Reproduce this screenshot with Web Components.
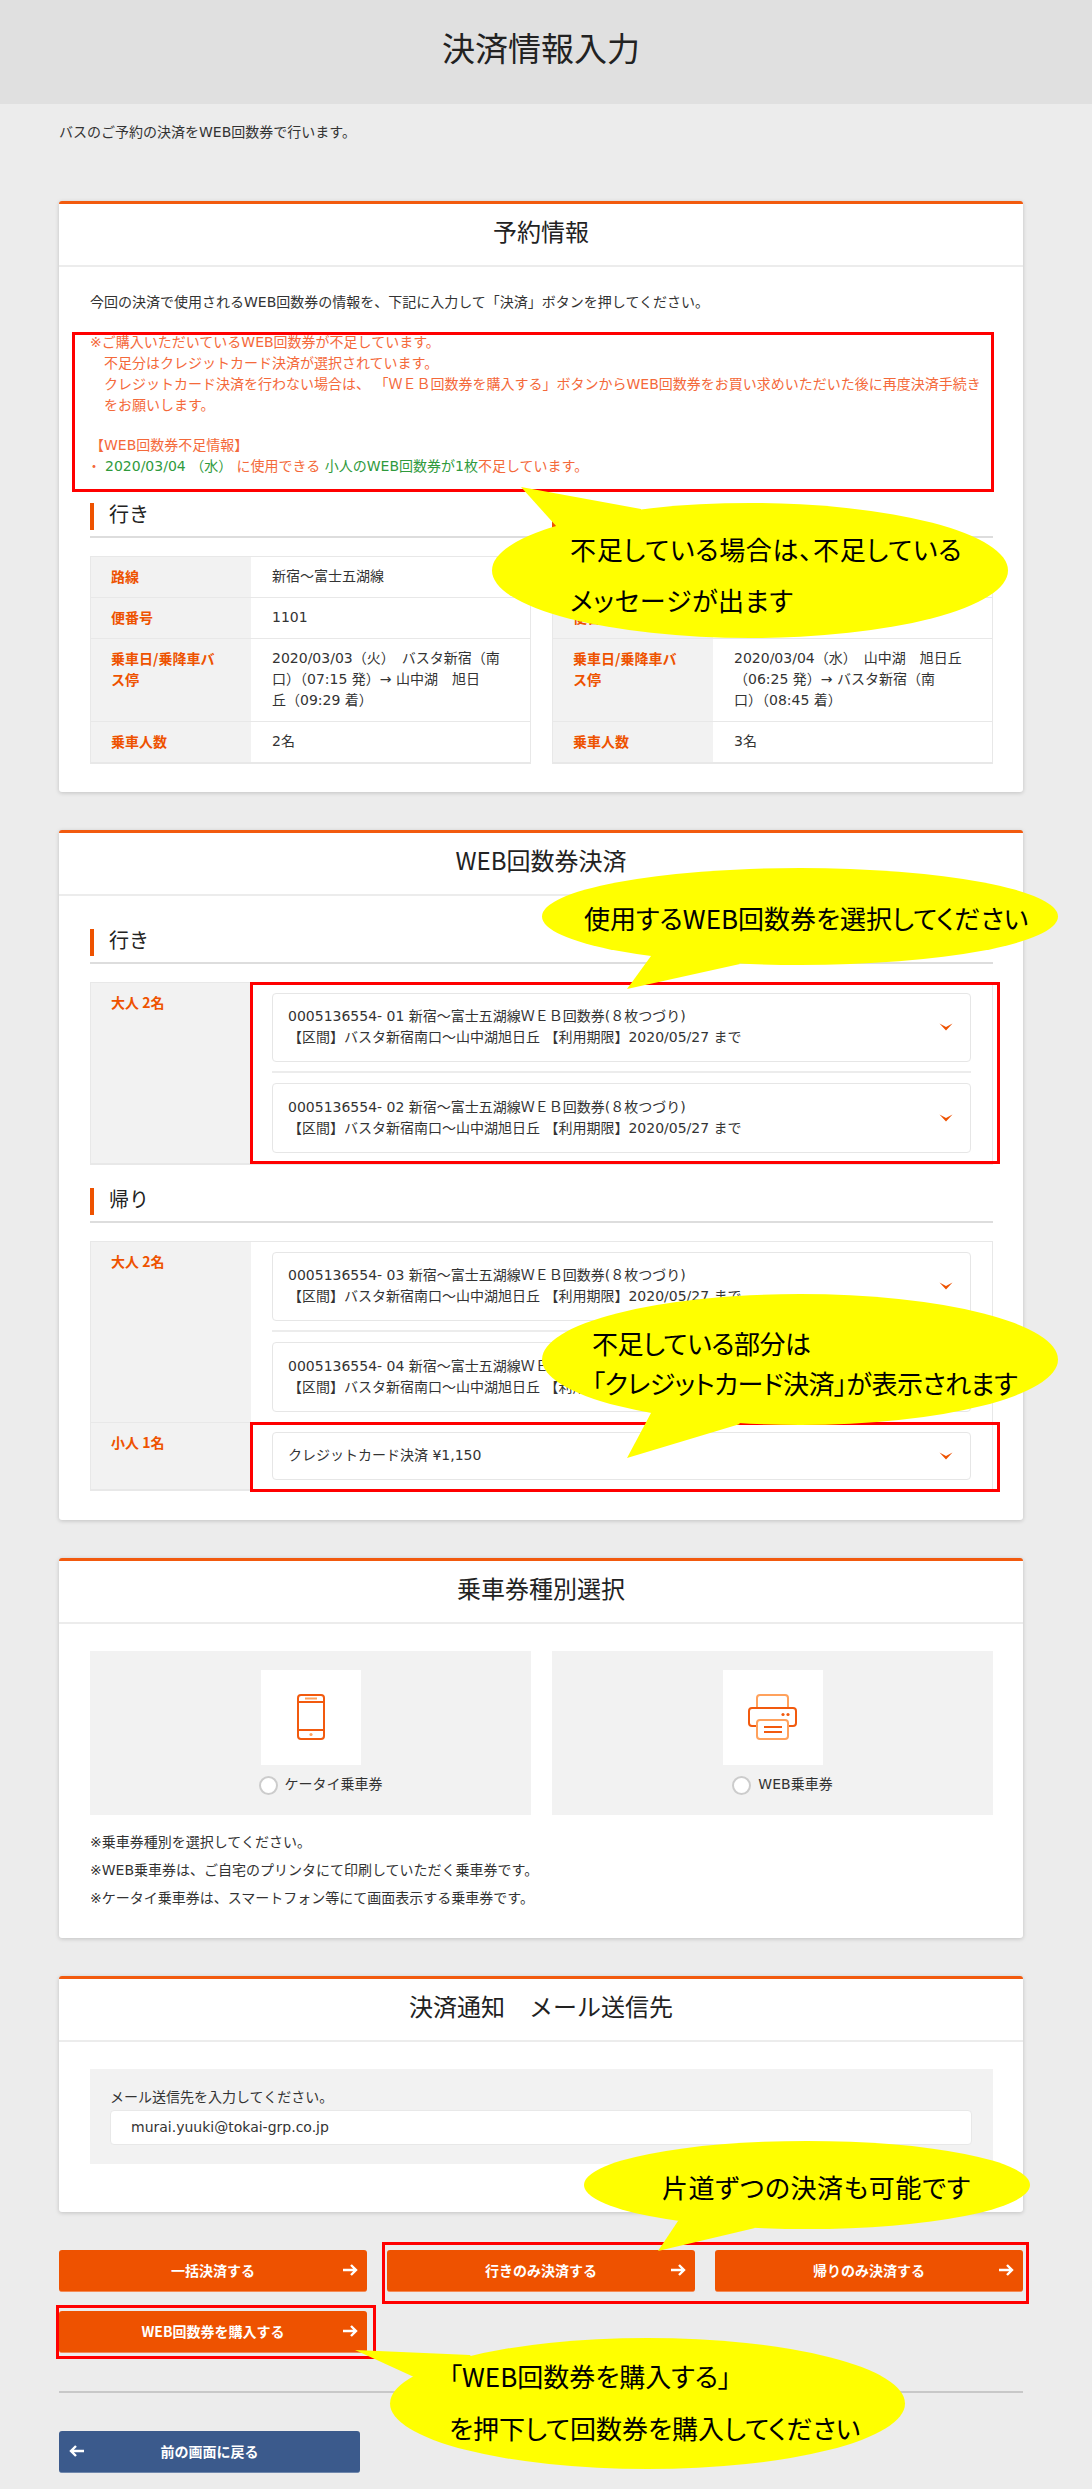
<!DOCTYPE html>
<html lang="ja">

<head>
    <meta charset="utf-8">
    <title>決済情報入力</title>
    <style>
        body {
            position: relative;
            margin: 0;
            height: 2489px;
            overflow: hidden;
            background: #ececec;
            color: #333;
            font: 14px/21px "DejaVu Sans", "Noto Sans CJK JP", sans-serif;
        }

        .wrap {
            display: flex;
            flex-direction: column;
            gap: 38px;
            padding: 0 69px 0 59px;
        }

        .intro {
            margin: 17.5px 0 0;
            height: 41px;
        }

        .two {
            display: grid;
            grid-template-columns: 1fr 1fr;
            gap: 21px;
        }
    </style>
</head>

<body>
    <page-head>決済情報入力</page-head>

    <div class="wrap">
        <p class="intro">バスのご予約の決済をWEB回数券で行います。</p>

        <pay-card heading="予約情報" top="25.5" bottom="28">
            <lead-text>今回の決済で使用されるWEB回数券の情報を、下記に入力して「決済」ボタンを押してください。</lead-text>
            <short-message></short-message>
            <div class="two">
                <div>
                    <sec-head>行き</sec-head>
                    <info-table>
                        <info-row label="路線">新宿～富士五湖線</info-row>
                        <info-row label="便番号">1101</info-row>
                        <info-row label="乗車日/乗降車バ<br>ス停">2020/03/03（火）　バスタ新宿（南<br>口）（07:15 発）→ 山中湖　旭日<br>丘（09:29 着）</info-row>
                        <info-row label="乗車人数">2名</info-row>
                    </info-table>
                </div>
                <div>
                    <sec-head>帰り</sec-head>
                    <info-table>
                        <info-row label="路線"></info-row>
                        <info-row label="便番号"></info-row>
                        <info-row label="乗車日/乗降車バ<br>ス停">2020/03/04（水）　山中湖　旭日丘<br>（06:25 発）→ バスタ新宿（南<br>口）（08:45 着）</info-row>
                        <info-row label="乗車人数">3名</info-row>
                    </info-table>
                </div>
            </div>
        </pay-card>

        <pay-card heading="WEB回数券決済" top="33" bottom="29">
            <sec-head>行き</sec-head>
            <info-table>
                <ticket-row label="大人 2名">
                    <ticket-select>0005136554- 01 新宿～富士五湖線ＷＥＢ回数券(８枚つづり)<br>【区間】バスタ新宿南口～山中湖旭日丘 【利用期限】2020/05/27 まで</ticket-select>
                    <ticket-select>0005136554- 02 新宿～富士五湖線ＷＥＢ回数券(８枚つづり)<br>【区間】バスタ新宿南口～山中湖旭日丘 【利用期限】2020/05/27 まで</ticket-select>
                </ticket-row>
            </info-table>
            <sec-head style="margin-top:23px">帰り</sec-head>
            <info-table>
                <ticket-row label="大人 2名">
                    <ticket-select>0005136554- 03 新宿～富士五湖線ＷＥＢ回数券(８枚つづり)<br>【区間】バスタ新宿南口～山中湖旭日丘 【利用期限】2020/05/27 まで</ticket-select>
                    <ticket-select>0005136554- 04 新宿～富士五湖線ＷＥＢ回数券(８枚つづり)<br>【区間】バスタ新宿南口～山中湖旭日丘 【利用期限】2020/05/27 まで</ticket-select>
                </ticket-row>
                <ticket-row label="小人 1名" compact>
                    <ticket-select single>クレジットカード決済 ¥1,150</ticket-select>
                </ticket-row>
            </info-table>
        </pay-card>

        <pay-card heading="乗車券種別選択" top="27" bottom="28.5">
            <div class="two">
                <type-panel icon="phone">ケータイ乗車券</type-panel>
                <type-panel icon="printer">WEB乗車券</type-panel>
            </div>
            <note-list>
                <div>※乗車券種別を選択してください。</div>
                <div>※WEB乗車券は、ご自宅のプリンタにて印刷していただく乗車券です。</div>
                <div>※ケータイ乗車券は、スマートフォン等にて画面表示する乗車券です。</div>
            </note-list>
        </pay-card>

        <pay-card heading="決済通知　メール送信先" top="27" bottom="48">
            <mail-field label="メール送信先を入力してください。">murai.yuuki@tokai-grp.co.jp</mail-field>
        </pay-card>

        <action-bar>
            <act-button>一括決済する</act-button>
            <act-button>行きのみ決済する</act-button>
            <act-button>帰りのみ決済する</act-button>
            <act-button>WEB回数券を購入する</act-button>
            <act-button back slot="back">前の画面に戻る</act-button>
        </action-bar>
    </div>

    <!-- 注釈 (画面の上に重ねる赤枠と吹き出し) -->
    <red-box area="72,332,922,160"></red-box>
    <red-box area="250,982,750,182"></red-box>
    <red-box area="250,1422,750,70"></red-box>
    <red-box area="382,2242,647,62"></red-box>
    <red-box area="56,2305,320,54"></red-box>

    <call-out style="letter-spacing:.7px" oval="492,503,516,135" tail="521,487 557,527 641,560 641,509" at="570,523" lh="51">不足している場合は、不足している<br>メッセージが出ます</call-out>
    <call-out oval="542,868,516,97" tail="627,989 651,956 700,930 740,964" at="584,897" lh="42">使用するWEB回数券を選択してください</call-out>
    <call-out style="letter-spacing:-.5px" oval="542,1294,516,131" tail="627,1458 651,1413 700,1380 740,1424" at="592,1323" lh="40">不足している部分は<br>「クレジットカード決済」が表示されます</call-out>
    <call-out style="letter-spacing:.6px" oval="584,2141,446,88" tail="658,2251 678,2221 720,2190 755,2228" at="662,2166" lh="42">片道ずつの決済も可能です</call-out>
    <call-out oval="390,2338,515,131" tail="355,2350 414,2377 500,2400 470,2355" at="449,2350" lh="52">「WEB回数券を購入する」<br>を押下して回数券を購入してください</call-out>

    <script>
        const ORANGE = '#ee5200'
        const HEAD_FONT = '"Noto Sans CJK JP", sans-serif'

        // shadow root helper
        function mount(el, html) {
            el.attachShadow({ mode: 'open' }).innerHTML = html
        }

        class PageHead extends HTMLElement {
            connectedCallback() {
                mount(this, `<style>
                    :host { display: block; height: 104px; background: #e0e0e0; padding-right: 10px; }
                    h1 { margin: 0; font: 400 33px/95px ${HEAD_FONT}; text-align: center; color: #222; }
                </style><h1><slot></slot></h1>`)
            }
        }

        class PayCard extends HTMLElement {
            connectedCallback() {
                const top = this.getAttribute('top')
                const bottom = this.getAttribute('bottom')
                mount(this, `<style>
                    :host { display: block; background: #fff; border-top: 3px solid #f25a0e; border-radius: 3px; box-shadow: 0 1px 4px rgba(0,0,0,.18); }
                    h2 { margin: 0; height: 61px; font: 400 24px/53px ${HEAD_FONT}; text-align: center; color: #222; border-bottom: 2px solid #ececec; }
                    .body { padding: ${top}px 30px ${bottom}px 31px; }
                </style><h2>${this.getAttribute('heading')}</h2><div class="body"><slot></slot></div>`)
            }
        }

        class LeadText extends HTMLElement {
            connectedCallback() {
                mount(this, `<style>:host { display: block; margin-bottom: 19px; }</style><slot></slot>`)
            }
        }

        class ShortMessage extends HTMLElement {
            connectedCallback() {
                mount(this, `<style>
                    :host { display: block; margin-bottom: 25.5px; color: #f4693a; white-space: nowrap; }
                    .ind { padding-left: 14px; }
                    .info { margin-top: 19px; }
                    .g { color: #2f9a3c; }
                    .dot { margin: 0 4px 0 -3px; }
                </style>
                <div>※ご購入いただいているWEB回数券が不足しています。</div>
                <div class="ind">不足分はクレジットカード決済が選択されています。</div>
                <div class="ind">クレジットカード決済を行わない場合は、 「ＷＥＢ回数券を購入する」ボタンからWEB回数券をお買い求めいただいた後に再度決済手続き<br>をお願いします。</div>
                <div class="info">【WEB回数券不足情報】</div>
                <div><span class="dot">・</span><span class="g">2020/03/04 （水）</span> に使用できる <span class="g">小人のWEB回数券が1枚</span>不足しています。</div>`)
            }
        }

        class SecHead extends HTMLElement {
            connectedCallback() {
                mount(this, `<style>
                    :host { display: block; border-bottom: 2px solid #ddd; padding-bottom: 6px; margin-bottom: 18px; }
                    div { border-left: 4px solid ${ORANGE}; padding: 0 0 5px 15px; font: 20px/22px ${HEAD_FONT}; color: #222; }
                </style><div><slot></slot></div>`)
            }
        }

        class InfoTable extends HTMLElement {
            connectedCallback() {
                mount(this, `<style>
                    :host { display: block; border: 1px solid #e8e8e8; border-bottom-width: 2px; }
                    ::slotted(*:not(:last-child)) { border-bottom: 1px solid #e8e8e8; }
                </style><slot></slot>`)
            }
        }

        class InfoRow extends HTMLElement {
            connectedCallback() {
                mount(this, `<style>
                    :host { display: grid; grid-template-columns: 160px 1fr; }
                    .th { background: #f2f2f2; color: ${ORANGE}; font-weight: 700; font-family: ${HEAD_FONT}; padding: 9.5px 20px; }
                    .td { padding: 9.5px 21px; min-height: 21px; white-space: nowrap; }
                </style><div class="th">${this.getAttribute('label')}</div><div class="td"><slot></slot></div>`)
            }
        }

        class TicketRow extends HTMLElement {
            connectedCallback() {
                const pad = this.hasAttribute('compact') ? 9 : 10
                mount(this, `<style>
                    :host { display: grid; grid-template-columns: 160px 1fr; }
                    .th { background: #f2f2f2; color: ${ORANGE}; font-weight: 700; font-family: ${HEAD_FONT}; padding: 9px 20px; }
                    .td { padding: ${pad}px 21px; display: flex; flex-direction: column; gap: 10px; }
                </style><div class="th">${this.getAttribute('label')}</div><div class="td"><slot></slot></div>`)
            }
        }

        class TicketSelect extends HTMLElement {
            connectedCallback() {
                const single = this.hasAttribute('single')
                mount(this, `<style>
                    :host { display: block; position: relative; }
                    :host(:not(:last-child)) { margin-bottom: 11px; }
                    :host(:not(:last-child))::after { content: ""; position: absolute; left: 0; right: 0; bottom: -11px; height: 2px; background: #ececec; }
                    .box { display: flex; align-items: center; justify-content: space-between; height: ${single ? 46 : 67.5}px; padding: 0 17px 0 15px; background: #fff; border: 1px solid #e6e6e6; border-radius: 4px; white-space: nowrap; }
                    svg { display: block; }
                </style><div class="box"><span><slot></slot></span>
                <svg width="14" height="8" viewBox="0 0 14 8"><polygon points="0.5,0.5 7,4 13.5,0.5 7,7.5" fill="${ORANGE}"/></svg></div>`)
            }
        }

        const ICONS = {
            phone: `<svg width="28" height="46" viewBox="0 0 28 46" fill="none" stroke="#f25a0e" stroke-width="2">
                <rect x="1" y="1" width="26" height="44" rx="3"/><path d="M1 8H27M1 36H27"/>
                <path d="M8 4.5H20" stroke="#ffa15c"/><circle cx="14" cy="40.5" r="1.6" fill="#ffa15c" stroke="none"/></svg>`,
            printer: `<svg width="50" height="46" viewBox="0 0 50 46" fill="none" stroke-width="2">
                <path d="M9 14V4a3 3 0 0 1 3-3H37a3 3 0 0 1 3 3V14" stroke="#ffa15c"/>
                <path d="M9 32H4a3 3 0 0 1-3-3V17a3 3 0 0 1 3-3H45a3 3 0 0 1 3 3V29a3 3 0 0 1-3 3H40" stroke="#f25a0e"/>
                <rect x="9" y="26" width="31" height="19" rx="3" fill="#fff" stroke="#ffa15c"/>
                <path d="M16 33H34M16 38H34" stroke="#f25a0e"/>
                <circle cx="35" cy="20.5" r="1.6" fill="#f25a0e"/><circle cx="40" cy="20.5" r="1.6" fill="#f25a0e"/></svg>`
        }

        class TypePanel extends HTMLElement {
            connectedCallback() {
                mount(this, `<style>
                    :host { display: flex; flex-direction: column; align-items: center; height: 164px; padding-top: 19px; box-sizing: border-box; background: #f2f2f2; }
                    .pic { width: 100px; height: 95px; background: #fff; display: flex; align-items: center; justify-content: center; }
                    label { display: flex; align-items: center; gap: 7px; margin: 9px 0 0 20px; height: 22px; }
                    i { width: 15px; height: 15px; border: 2px solid #ccc; border-radius: 50%; background: #fff; margin-top: 2px; }
                </style><div class="pic">${ICONS[this.getAttribute('icon')]}</div>
                <label><i></i><span><slot></slot></span></label>`)
            }
        }

        class NoteList extends HTMLElement {
            connectedCallback() {
                mount(this, `<style>
                    :host { display: flex; flex-direction: column; gap: 7px; margin-top: 17.5px; }
                </style><slot></slot>`)
            }
        }

        class MailField extends HTMLElement {
            connectedCallback() {
                mount(this, `<style>
                    :host { display: block; background: #f2f2f2; padding: 18.5px 21px 19px 20px; }
                    .label { margin-bottom: 1.5px; }
                    .input { height: 33px; line-height: 33px; padding: 0 20px; background: #fff; border: 1px solid #e8e8e8; border-radius: 4px; }
                </style><div class="label">${this.getAttribute('label')}</div><div class="input"><slot></slot></div>`)
            }
        }

        class ActionBar extends HTMLElement {
            connectedCallback() {
                mount(this, `<style>
                    :host { display: block; }
                    .grid { display: grid; grid-template-columns: repeat(3, 1fr); gap: 19px 20px; }
                    hr { margin: 38px 0 38px; border: 0; border-top: 2px solid #c8c8c8; }
                    .back { width: 301px; }
                </style><div class="grid"><slot></slot></div><hr><div class="back"><slot name="back"></slot></div>`)
            }
        }

        class ActButton extends HTMLElement {
            connectedCallback() {
                const back = this.hasAttribute('back')
                const arrow = back
                    ? '<path d="M15 6H2M7 1 2 6 7 11"/>'
                    : '<path d="M0 6H13M8 1 13 6 8 11"/>'
                mount(this, `<style>
                    :host { display: flex; align-items: center; justify-content: center; position: relative; height: 42px; box-sizing: border-box;
                        background: ${back ? '#3b5a8c' : ORANGE}; color: #fff; font-weight: 700; font-family: ${HEAD_FONT}; border-radius: 3px; border-bottom: 1px solid ${back ? '#7088ad' : '#f58a55'}; }
                    svg { position: absolute; top: 14px; ${back ? 'left: 10px' : 'right: 9px'}; }
                </style><slot></slot>
                <svg width="15" height="12" viewBox="0 0 15 12" fill="none" stroke="#fff" stroke-width="2.4">${arrow}</svg>`)
            }
        }

        class RedBox extends HTMLElement {
            connectedCallback() {
                const [x, y, w, h] = this.getAttribute('area').split(',')
                mount(this, `<style>
                    :host { position: absolute; left: ${x}px; top: ${y}px; width: ${w}px; height: ${h}px; box-sizing: border-box; border: 3px solid #f00; pointer-events: none; }
                </style>`)
            }
        }

        class CallOut extends HTMLElement {
            connectedCallback() {
                const [x, y, w, h] = this.getAttribute('oval').split(',').map(Number)
                const [tx, ty] = this.getAttribute('at').split(',')
                mount(this, `<style>
                    :host { position: absolute; inset: 0; pointer-events: none; }
                    svg { position: absolute; left: 0; top: 0; }
                    div { position: absolute; left: ${tx}px; top: ${ty}px; font: 26px/${this.getAttribute('lh')}px ${HEAD_FONT}; font-feature-settings: "palt"; color: #000; white-space: nowrap; }
                </style><svg width="1092" height="2489" fill="#ff0">
                    <ellipse cx="${x + w / 2}" cy="${y + h / 2}" rx="${w / 2}" ry="${h / 2}"/>
                    <polygon points="${this.getAttribute('tail')}"/>
                </svg><div><slot></slot></div>`)
            }
        }

        customElements.define('page-head', PageHead)
        customElements.define('pay-card', PayCard)
        customElements.define('lead-text', LeadText)
        customElements.define('short-message', ShortMessage)
        customElements.define('sec-head', SecHead)
        customElements.define('info-table', InfoTable)
        customElements.define('info-row', InfoRow)
        customElements.define('ticket-row', TicketRow)
        customElements.define('ticket-select', TicketSelect)
        customElements.define('type-panel', TypePanel)
        customElements.define('note-list', NoteList)
        customElements.define('mail-field', MailField)
        customElements.define('action-bar', ActionBar)
        customElements.define('act-button', ActButton)
        customElements.define('red-box', RedBox)
        customElements.define('call-out', CallOut)
    </script>
</body>

</html>
